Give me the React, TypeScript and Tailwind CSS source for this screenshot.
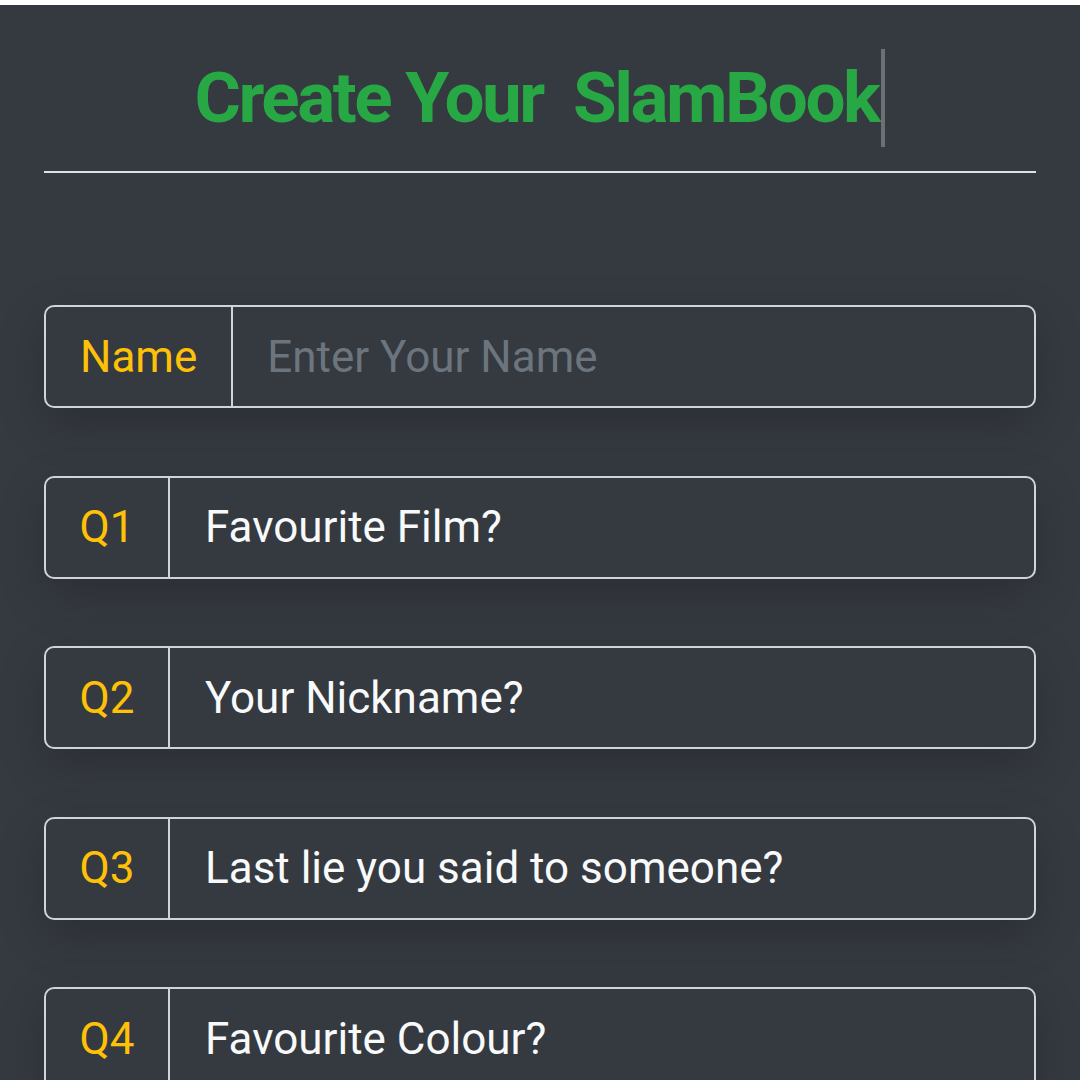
import React from "react";

const rows = [
  { label: "Q1", text: "Favourite Film?" },
  { label: "Q2", text: "Your Nickname?" },
  { label: "Q3", text: "Last lie you said to someone?" },
  { label: "Q4", text: "Favourite Colour?" },
];

export default function App() {
  return (
    <div
      className="w-[1080px] h-[1080px] overflow-hidden bg-[#353940]"
      style={{ fontFamily: "Roboto, 'Noto Sans', sans-serif" }}
    >
      <div className="h-[5px] bg-white" />
      <div className="px-[44px]">
        <div className="mt-[44px] flex h-[98px] items-center justify-center">
          <span className="whitespace-pre text-[71px] font-bold leading-[98px] tracking-[-2.5px] text-[#28a745]">
            {"Create Your  SlamBook"}
          </span>
          <span className="ml-[3px] h-[98px] w-[4px] bg-[#6c6f74]" />
        </div>
        <div className="mt-[24px] h-[2px] bg-[#dee2e6]" />

        <div className="mt-[132px] flex flex-col gap-[67.5px]">
          <div className="flex h-[103px] shrink-0 rounded-[10px] border-2 border-[#ced4da] shadow-[0_16px_48px_rgba(0,0,0,0.18)]">
            <div className="flex items-center border-r-2 border-[#ced4da] px-[34px] text-[44px] text-[#ffc107]">
              Name
            </div>
            <div className="flex items-center px-[34px] text-[44px] text-[#6c757d]">
              Enter Your Name
            </div>
          </div>
          {rows.map((r) => (
            <div
              key={r.label}
              className="flex h-[103px] shrink-0 rounded-[10px] border-2 border-[#ced4da] shadow-[0_16px_48px_rgba(0,0,0,0.18)]"
            >
              <div className="flex w-[124px] items-center justify-center border-r-2 border-[#ced4da] text-[44px] text-[#ffc107]">
                {r.label}
              </div>
              <div className="flex items-center px-[35px] text-[44px] text-[#f8f9fa]">
                {r.text}
              </div>
            </div>
          ))}
        </div>
      </div>
    </div>
  );
}
